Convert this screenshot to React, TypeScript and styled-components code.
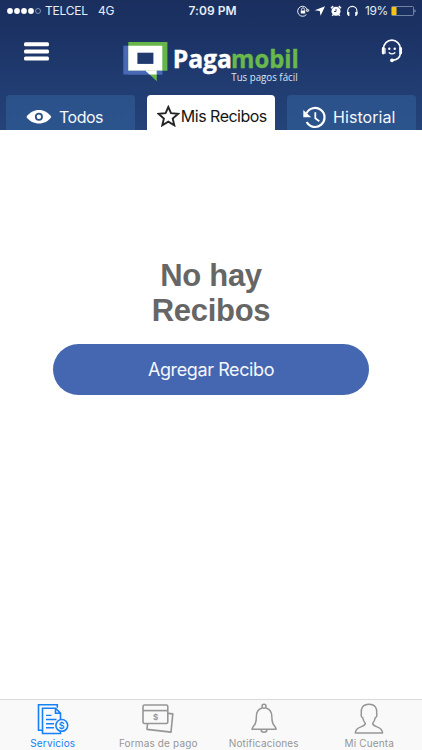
import React from "react";
import styled, { createGlobalStyle } from "styled-components";

const Global = createGlobalStyle`
  * { box-sizing: border-box; }
  body { margin: 0; background: #fff; font-family: Inter, "Liberation Sans", sans-serif; }
  svg { display: block; flex: none; }
`;

const Screen = styled.div`
  width: 422px;
  height: 750px;
  display: flex;
  flex-direction: column;
  overflow: hidden;
  background: #fff;
`;

const Header = styled.header`
  height: 130px;
  flex: none;
  background: linear-gradient(#1a2f5e 0%, #1b3264 25%, #203b70 60%, #244379 100%);
`;

const StatusBar = styled.div`
  height: 22px;
  display: grid;
  grid-template-columns: 1fr 50px 1fr;
  align-items: center;
  padding: 0 6px 0 7px;
  color: #e8edf7;
  font-size: 12px;
  line-height: 22px;
  white-space: nowrap;
`;

const StatusGroup = styled.div<{ $end?: boolean }>`
  display: flex;
  align-items: center;
  justify-content: ${(p) => (p.$end ? "flex-end" : "flex-start")};
`;

const Carrier = styled.span`
  margin-left: 3px;
  width: 53px;
  letter-spacing: -0.25px;
`;

const Network = styled.span`
  letter-spacing: -0.2px;
`;

const Clock = styled.span`
  font-weight: 600;
  letter-spacing: 0.05px;
  padding-left: 2px;
`;

const Percent = styled.span`
  width: 27px;
  margin-left: 3px;
  padding-left: 1px;
  letter-spacing: -0.4px;
`;

const BrandRow = styled.div`
  height: 73px;
  display: flex;
  align-items: flex-start;
  padding: 17px 19px 0 24px;
`;

const LogoLink = styled.a`
  margin: 0 auto 0 73px;
`;

const IconButton = styled.button<{ $top: number }>`
  border: 0;
  padding: 0;
  background: none;
  color: #fff;
  margin-top: ${(p) => p.$top}px;
`;

const Tabs = styled.nav`
  display: grid;
  grid-template-columns: 128.5px 128px 128.5px;
  column-gap: 12.3px;
  height: 35px;
  padding: 0 6px;
`;

const Tab = styled.button<{ $active?: boolean; $left: number; $gap: number; $drop: number }>`
  display: flex;
  align-items: center;
  gap: ${(p) => p.$gap}px;
  padding: ${(p) => p.$drop}px 0 0 ${(p) => p.$left}px;
  border: 0;
  border-radius: 4px 4px 0 0;
  background: ${(p) => (p.$active ? "#fff" : "linear-gradient(#2b5189, #2c548c)")};
  color: ${(p) => (p.$active ? "#151515" : "#f5f8fd")};
  height: 35px;
`;

const TabText = styled.span<{ $track: number }>`
  font: 400 16px/20px Inter, sans-serif;
  letter-spacing: ${(p) => p.$track}px;
  white-space: nowrap;
`;

const Main = styled.main`
  flex: 1;
  display: flex;
  flex-direction: column;
  align-items: center;
  padding-top: 128px;
`;

const Message = styled.h1`
  margin: 0;
  width: 160px;
  text-align: center;
  color: #666;
  font: 700 31px/35px "Liberation Sans", Arial, sans-serif;
  letter-spacing: -0.3px;
`;

const AddButton = styled.button`
  margin-top: 16px;
  width: 316px;
  height: 51px;
  border: 0;
  border-radius: 26px;
  background: #4566b0;
  color: #f4f7fd;
  font: 400 18px/22px Inter, sans-serif;
  letter-spacing: -0.4px;
`;

const BottomBar = styled.nav`
  height: 51px;
  flex: none;
  display: grid;
  grid-template-columns: repeat(4, 105.5px);
  border-top: 1px solid #d9d9d9;
  background: #f9f9f9;
`;

const BottomItem = styled.button<{ $active?: boolean }>`
  display: flex;
  flex-direction: column;
  align-items: center;
  padding: 3px 0 0;
  border: 0;
  background: none;
  color: ${(p) => (p.$active ? "#1680f5" : "#969696")};
`;

const BottomLabel = styled.span<{ $track: number }>`
  margin-top: 2px;
  font: 400 10px/12px Inter, sans-serif;
  letter-spacing: ${(p) => p.$track}px;
  white-space: nowrap;
`;

const Signal = () => (
  <svg width="35" height="8" fill="#fff">
    {[3, 10, 17, 24].map((x) => <circle key={x} cx={x} cy="4" r="2.9" />)}
    <circle cx="31" cy="4" r="2.5" fill="none" stroke="#a9b6d0" strokeWidth=".7" />
  </svg>
);

const StatusIcons = () => (
  <svg width="64" height="14" viewBox="0 0 64 14" fill="none" stroke="#fff">
    <path d="M9.4 10.6A5 5 0 1 1 10.5 6M8.9 6h3.2l-1.6 2z" strokeWidth=".9" />
    <path d="M3.8 6.5h4.4v3H3.8z" fill="#fff" stroke="none" />
    <path d="M4.6 6.5V5.2a1.4 1.4 0 0 1 2.8 0v1.3" strokeWidth=".8" />
    <path d="M28 2.2l-4.4 9.6-.9-4.9-4.9-.7z" fill="#fff" stroke="none" />
    <circle cx="39" cy="7.3" r="4.5" fill="#fff" stroke="none" />
    <path d="M34 4.2l2.2-2.1M44 4.2l-2.2-2.1M36.2 10.8l-1 1M41.8 10.8l1 1" strokeWidth="1.5" />
    <path d="M39 4.9v2.6h-2" stroke="#1b3060" strokeWidth=".9" />
    <path d="M50.7 9V7a4.6 4.6 0 0 1 9.2 0v2" strokeWidth="1.1" />
    <path d="M50 8.1h2.4v4h-1L50 10.2zM60.6 8.1h-2.4v4h1l1.4-1.9z" fill="#fff" stroke="none" />
  </svg>
);

const Battery = () => (
  <svg width="25" height="10">
    <rect x=".5" y=".5" width="22" height="9" rx="1" fill="none" stroke="#9aa6bf" strokeWidth=".7" />
    <rect x="1" y="1" width="4.5" height="8" fill="#f8c514" />
    <path d="M23.6 3.2c1.2.6 1.2 3 0 3.6z" fill="#b8c2d6" />
  </svg>
);

const MenuIcon = () => (
  <svg width="25" height="19" fill="#fff">
    <rect y=".2" width="25" height="4" rx="1.5" />
    <rect y="7.4" width="25" height="4" rx="1.5" />
    <rect y="14.6" width="25" height="4" rx="1.5" />
  </svg>
);

const Logo = () => (
  <svg width="178" height="46" viewBox="122 39 178 46">
    <rect x="123.3" y="45.7" width="39" height="28.8" fill="#4968b6" />
    <path d="M128.3 42h39.1v28.7h-10.6v10.6l-11.3-10.6h-17.2z" fill="#68b54a" />
    <path d="M128.3 45.7h34v25h-34z" fill="#fff" />
    <path d="M128.3 70.7h17.3l4 3.8h-21.3z" fill="#4968b6" />
    <path d="M145.4 70.7h11.4v3.8h-7.2z" fill="#fff" />
    <path d="M156.8 70.7h5.5v3.8h-5.5z" fill="#4968b6" />
    <rect x="137.4" y="52.7" width="16" height="11.2" fill="#203a70" />
    <g fontFamily="Open Sans, Noto Sans, sans-serif" fontWeight="700" fontSize="25" strokeWidth=".4">
      <text x="172.7" y="67.5" fill="#fff" stroke="#fff" textLength="59.3" lengthAdjust="spacingAndGlyphs">Paga</text>
      <text x="231" y="67.5" fill="#69b84b" stroke="#69b84b" textLength="67.8" lengthAdjust="spacingAndGlyphs">mobil</text>
    </g>
    <text x="231.3" y="81" fill="#dce5f2" fontFamily="Open Sans, Noto Sans, sans-serif" fontSize="10.2" textLength="66.3" lengthAdjust="spacingAndGlyphs">Tus pagos fácil</text>
  </svg>
);

const SupportIcon = () => (
  <svg width="22" height="25" viewBox="0 0 22 25" fill="none" stroke="#fff" strokeLinecap="round">
    <path d="M2.5 9.5a8.4 8.4 0 0 1 16.8 0M19.3 14.8c-.4 3.4-3.4 5.7-7.1 6.3" strokeWidth="1.6" />
    <path d="M2.3 9.4v4.6M19.6 9.4v4.6" strokeWidth="2.9" />
    <path d="M4.1 9.5v5" strokeWidth="1" />
    <circle cx="11" cy="21.3" r="1.9" fill="#fff" stroke="none" />
    <circle cx="8.3" cy="9.8" r="1.2" fill="#fff" stroke="none" />
    <circle cx="13.7" cy="9.8" r="1.2" fill="#fff" stroke="none" />
    <path d="M8.2 13.8c1.5 1.5 4.1 1.5 5.6 0" strokeWidth="1.3" />
  </svg>
);

const EyeIcon = () => (
  <svg width="26" height="16" viewBox="0 0 26 16">
    <path d="M.4 8C6.5-1.3 19.5-1.3 25.3 8 19.5 16.7 6.5 16.7.4 8z" fill="#fff" />
    <circle cx="12.9" cy="7.7" r="3.1" fill="none" stroke="#2b5088" strokeWidth="1.8" />
  </svg>
);

const StarIcon = () => (
  <svg width="23" height="22" viewBox="0 0 23 22" fill="none" stroke="#252525" strokeWidth="1.9">
    <path d="M11.3 2l2.7 6.2 7.1.6-5.4 4.7 1.6 6.8-6-3.6-6 3.6 1.6-6.8-5.4-4.7 7.1-.6z" />
  </svg>
);

const HistoryIcon = () => (
  <svg width="24" height="23" viewBox="0 0 24 23" fill="none" stroke="#fff">
    <path d="M3.5 7.3A9.5 9.5 0 1 1 3.7 16" strokeWidth="2.2" />
    <path d="M.3 4v7.3h7.9z" fill="#fff" stroke="none" />
    <path d="M12.3 6.3v5.9l4 3" strokeWidth="1.8" />
  </svg>
);

const ServicesIcon = () => (
  <svg width="32" height="32" viewBox="0 0 32 32" fill="none" stroke="currentColor" strokeWidth="1.6">
    <path d="M5.3 27.2H1.5V1.8h18.8v3" />
    <path d="M16.5 30.5H5.5V5.2h13l5 5v6M18.5 5.2v5h5" />
    <path d="M9 12.4h5.5M9 16.5h10.5M9 20.7h8M9 24.7h8" strokeWidth="1.4" />
    <path d="M23.5 28.5v2H16" />
    <circle cx="24.8" cy="22.4" r="5.9" fill="#f9f9f9" />
    <text x="24.8" y="25.7" textAnchor="middle" fill="currentColor" stroke="none" fontFamily="Inter" fontWeight="600" fontSize="9">$</text>
  </svg>
);

const PaymentIcon = () => (
  <svg width="32" height="32" viewBox="0 0 32 32" fill="none" stroke="currentColor" strokeWidth="1.6">
    <rect x="1" y="2" width="24.8" height="18.5" rx="1.5" />
    <path d="M1 7.6h24.8" />
    <path d="M26 10.4l4.8.5-1.8 18.2-24-2.7.5-5.7" strokeLinejoin="round" />
    <text x="13.5" y="17.2" textAnchor="middle" fill="currentColor" stroke="none" fontFamily="Inter" fontWeight="700" fontSize="8">$</text>
  </svg>
);

const BellIcon = () => (
  <svg width="32" height="32" viewBox="0 0 32 32" fill="none" stroke="currentColor" strokeWidth="1.5" strokeLinejoin="round">
    <circle cx="16" cy="3.3" r="2" />
    <path d="M14 5c-4 1.2-5.6 4.3-5.6 8.3 0 3.1-.3 5.6-1.2 7.6-.8 1.7-2.6 2.1-3.2 5.4h24.2c-.6-3.3-2.4-3.7-3.2-5.4-.9-2-1.2-4.5-1.2-7.6 0-4-1.8-7.1-5.8-8.3" />
    <path d="M13 26.5c0 3.8 6 3.8 6 0" />
  </svg>
);

const PersonIcon = () => (
  <svg width="32" height="32" viewBox="0 0 32 32" fill="none" stroke="currentColor" strokeWidth="1.5" strokeLinejoin="round">
    <path d="M12.3 20.3c-1.4-1.5-2.1-3.5-2.5-5.5-1.4-.3-2-2.4-1.5-3.7C7.5 5.7 9.6 1.3 16 1.3s8.5 4.4 7.7 9.8c.5 1.3-.1 3.4-1.5 3.7-.4 2-1.1 4-2.5 5.5-.3 4.5 9.4 1.9 9.9 9.7H2.3c.5-7.8 10.3-5.2 10-9.7z" />
  </svg>
);

export default function App() {
  return (
    <Screen>
      <Global />
      <Header>
        <StatusBar>
          <StatusGroup>
            <Signal />
            <Carrier>TELCEL</Carrier>
            <Network>4G</Network>
          </StatusGroup>
          <Clock>7:09 PM</Clock>
          <StatusGroup $end>
            <StatusIcons />
            <Percent>19%</Percent>
            <Battery />
          </StatusGroup>
        </StatusBar>
        <BrandRow>
          <IconButton $top={3} aria-label="Menú"><MenuIcon /></IconButton>
          <LogoLink><Logo /></LogoLink>
          <IconButton $top={0} aria-label="Soporte"><SupportIcon /></IconButton>
        </BrandRow>
        <Tabs>
          <Tab $left={20} $gap={7} $drop={9}>
            <EyeIcon />
            <TabText $track={-0.5}>Todos</TabText>
          </Tab>
          <Tab $active $left={10} $gap={1} $drop={6}>
            <StarIcon />
            <TabText $track={-0.5}>Mis Recibos</TabText>
          </Tab>
          <Tab $left={16} $gap={6} $drop={9}>
            <HistoryIcon />
            <TabText $track={0.05}>Historial</TabText>
          </Tab>
        </Tabs>
      </Header>
      <Main>
        <Message>No hay Recibos</Message>
        <AddButton>Agregar Recibo</AddButton>
      </Main>
      <BottomBar>
        <BottomItem $active>
          <ServicesIcon />
          <BottomLabel $track={0.15}>Servicios</BottomLabel>
        </BottomItem>
        <BottomItem>
          <PaymentIcon />
          <BottomLabel $track={0.15}>Formas de pago</BottomLabel>
        </BottomItem>
        <BottomItem>
          <BellIcon />
          <BottomLabel $track={0.15}>Notificaciones</BottomLabel>
        </BottomItem>
        <BottomItem>
          <PersonIcon />
          <BottomLabel $track={0.15}>Mi Cuenta</BottomLabel>
        </BottomItem>
      </BottomBar>
    </Screen>
  );
}
